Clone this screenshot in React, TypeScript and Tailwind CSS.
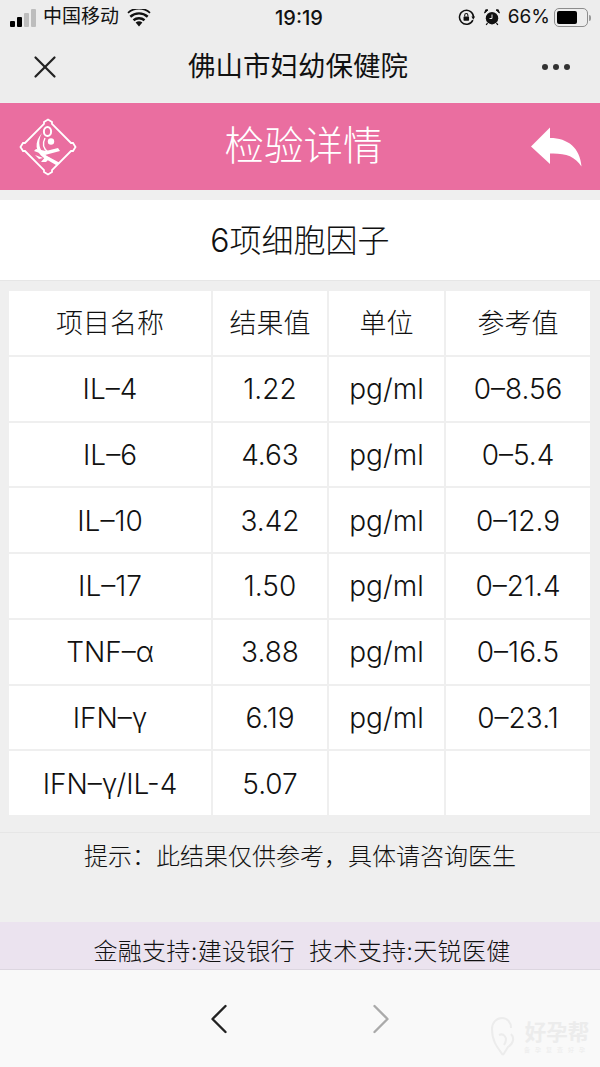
import React from 'react';
import { X, ChevronLeft, ChevronRight } from 'lucide-react';

const rows = [
  ['IL-4', '1.22', 'pg/ml', '0-8.56'],
  ['IL-6', '4.63', 'pg/ml', '0-5.4'],
  ['IL-10', '3.42', 'pg/ml', '0-12.9'],
  ['IL-17', '1.50', 'pg/ml', '0-21.4'],
  ['TNF-α', '3.88', 'pg/ml', '0-16.5'],
  ['IFN-γ', '6.19', 'pg/ml', '0-23.1'],
  ['IFN-γ/IL-4', '5.07', '', ''],
];

const head = ['项目名称', '结果值', '单位', '参考值'];

function Logo() {
  return (
    <svg width="58" height="58" viewBox="0 0 58 58" fill="none">
      <path
        d="M25 4 L29 1.5 L33 4 L33 6 L52 25 L54 25 L56.5 29 L54 33 L52 33 L33 52 L33 54 L29 56.5 L25 54 L25 52 L6 33 L4 33 L1.5 29 L4 25 L6 25 L25 6 Z"
        stroke="white"
        strokeWidth="1.8"
      />
      <ellipse cx="28.5" cy="13.5" rx="3.6" ry="4.6" stroke="white" strokeWidth="2" />
      <circle cx="32" cy="23.5" r="3.2" fill="white" />
      <path d="M23 15 C18 24 20 33 28 38 L41 45 L37 47 L25 40 C16 34 15 24 23 15 Z" fill="white" />
      <path d="M26 20 C23 26 25 31 29 34" stroke="white" strokeWidth="1.4" />
      <path d="M15 33 L26 37 L41 33 L39 30 L27 33 L17 31 Z" fill="white" />
      <path d="M27 38 L22 44 L27 44 L31 40 Z M16 37 L24 40 L20 41 Z" fill="white" />
    </svg>
  );
}

function Signal() {
  return (
    <div className="flex items-end gap-[2px] h-[18px]">
      <div className="w-[5px] h-[6px] rounded-[1px] bg-black" />
      <div className="w-[5px] h-[10px] rounded-[1px] bg-black" />
      <div className="w-[5px] h-[14px] rounded-[1px] bg-[#bdbdbd]" />
      <div className="w-[5px] h-[18px] rounded-[1px] bg-[#bdbdbd]" />
    </div>
  );
}

function Wifi() {
  return (
    <svg width="24" height="18" viewBox="0 0 22 17">
      <path d="M11 16.5 L7.8 12.8 A5 5 0 0 1 14.2 12.8 Z" fill="#111" />
      <path d="M5.8 10.6 A8 8 0 0 1 16.2 10.6" stroke="#111" strokeWidth="2.3" fill="none" />
      <path d="M2.8 7.3 A12.2 12.2 0 0 1 19.2 7.3" stroke="#111" strokeWidth="2.3" fill="none" />
      <path d="M0.6 3.6 A15.5 15.5 0 0 1 21.4 3.6" stroke="#111" strokeWidth="1.6" fill="none" />
    </svg>
  );
}

function RotationLock() {
  return (
    <svg width="17" height="17" viewBox="0 0 16 16" fill="none">
      <path d="M14 10.5 A6.6 6.6 0 1 1 14.6 8" stroke="#111" strokeWidth="1.4" />
      <path d="M12.6 7 L16 7 L14.4 10 Z" fill="#111" />
      <rect x="5.2" y="7" width="5.2" height="4" rx="0.6" fill="#111" />
      <path d="M6.3 7 V5.8 A1.5 1.5 0 0 1 9.3 5.8 V7" stroke="#111" strokeWidth="1" />
    </svg>
  );
}

function Alarm() {
  return (
    <svg width="16" height="17" viewBox="0 0 16 17" fill="none">
      <circle cx="8" cy="9.2" r="6.2" fill="#111" />
      <path d="M0.6 4 L4 0.9 L1.7 0.8 Z M15.4 4 L12 0.9 L14.3 0.8 Z" fill="#111" stroke="#111" />
      <path d="M8 5.5 V9.5 H5.5" stroke="#ededed" strokeWidth="1" />
      <path d="M3.5 14 L2.2 16 M12.5 14 L13.8 16" stroke="#111" strokeWidth="1.3" />
    </svg>
  );
}

function ReplyArrow() {
  return (
    <svg width="52" height="40" viewBox="0 0 52 40">
      <path d="M1 19.5 L20 0.5 V11 C38 11 50 21 51.5 39.5 C45 29 35 26 20 26.5 V37 Z" fill="white" />
    </svg>
  );
}

function Watermark() {
  return (
    <div className="flex items-center gap-[9px]">
      <svg width="24" height="40" viewBox="0 0 24 40" fill="none">
        <path d="M12 38 C6 30 1 24 1 12 C1 5 6 1 11 1 C16 1 20 5 20 11 M20 17 C24 21 22 27 17 30 L12 38" stroke="#ececec" strokeWidth="2" />
        <path d="M8 18 C12 16 18 20 13 28" stroke="#ececec" strokeWidth="2" />
      </svg>
      <div className="flex flex-col items-center">
        <span className="text-[21.5px] leading-[25px] font-bold text-[#ececec]">好孕帮</span>
        <span className="text-[6px] leading-[10px] tracking-[5px] text-[#ececec]">备孕复查好孕</span>
      </div>
    </div>
  );
}

export default function App() {
  return (
    <div
      className="w-[600px] h-[1067px] overflow-hidden flex flex-col bg-[#efefef] text-[#111]"
      style={{ fontFamily: 'Inter, "Noto Sans CJK SC", sans-serif' }}
    >
      <div className="bg-[#ededed] h-[102px] shrink-0 flex flex-col">
        <div className="h-[34px] flex items-center pl-[10px] pr-[9px] pt-[1px]">
          <Signal />
          <span className="ml-[7px] text-[19px]">中国移动</span>
          <span className="ml-[8px]"><Wifi /></span>
          <span className="ml-[124px] text-[20px] font-medium">19:19</span>
          <div className="ml-auto flex items-center">
            <RotationLock />
            <span className="ml-[9px]"><Alarm /></span>
            <span className="ml-[8px] text-[19px]">66%</span>
            <div className="ml-[4px] w-[34px] h-[19px] rounded-[5px] border border-[#8d8d8d] p-[2px]">
              <div className="w-[20px] h-full rounded-[2px] bg-black" />
            </div>
            <div className="w-[2px] h-[6px] bg-[#9a9a9a] ml-[1px] rounded-r" />
          </div>
        </div>
        <div className="flex-1 flex items-center justify-between pl-[26px] pr-[30px] pb-[2px] relative">
          <X size={38} strokeWidth={1.4} className="text-[#222]" />
          <span className="absolute left-0 right-[4px] text-center text-[27.5px] text-[#111]">佛山市妇幼保健院</span>
          <div className="flex gap-[5px]">
            <div className="w-[6px] h-[6px] rounded-full bg-[#333]" />
            <div className="w-[6px] h-[6px] rounded-full bg-[#333]" />
            <div className="w-[6px] h-[6px] rounded-full bg-[#333]" />
          </div>
        </div>
      </div>

      <div className="mt-px h-[87px] shrink-0 bg-[#ea6ea0] flex items-center justify-between pl-[19px] pr-[18px]">
        <Logo />
        <span className="text-white text-[39.5px] font-light">检验详情</span>
        <ReplyArrow />
      </div>

      <div className="mt-[10px] h-[81px] shrink-0 bg-white border-b border-[#e6e6e6] flex items-center justify-center text-[32px] font-light pt-[2px]">
        6项细胞因子
      </div>

      <div className="mt-[10px] ml-[9px] w-[581px] grid grid-cols-[202px_114px_115px_144px] auto-rows-[63.75px] gap-[2px]">
        {head.map((h) => (
          <div key={h} className="bg-white flex items-center justify-center text-[27px] font-light pt-[3px]">{h}</div>
        ))}
        {rows.map((r) =>
          r.map((c, i) => (
            <div key={r[0] + i} className="bg-white flex items-center justify-center text-[28px] font-light pt-[1px]">
              {c.replace('-', '\u2013')}
            </div>
          ))
        )}
      </div>

      <div className="mt-[17px] h-[90px] shrink-0 border-t border-[#e6e6e6] text-center text-[24px] font-light pt-[6px]">
        提示：此结果仅供参考，具体请咨询医生
      </div>

      <div className="h-[48px] shrink-0 bg-[#ebe3ef] border-b border-[#dcd6e0] flex items-end justify-center text-[24px] leading-[34px] tracking-[0.3px] font-light text-[#111] whitespace-pre pl-[4px]">
        金融支持:建设银行  技术支持:天锐医健
      </div>

      <div className="flex-1 bg-[#f9f9f9] flex items-center justify-center relative">
        <div className="flex gap-[110px]">
          <ChevronLeft size={52} strokeWidth={1.1} className="text-[#222]" />
          <ChevronRight size={52} strokeWidth={1.1} className="text-[#aaaaaa]" />
        </div>
        <div className="absolute right-[10px] bottom-[10px]">
          <Watermark />
        </div>
      </div>
    </div>
  );
}
